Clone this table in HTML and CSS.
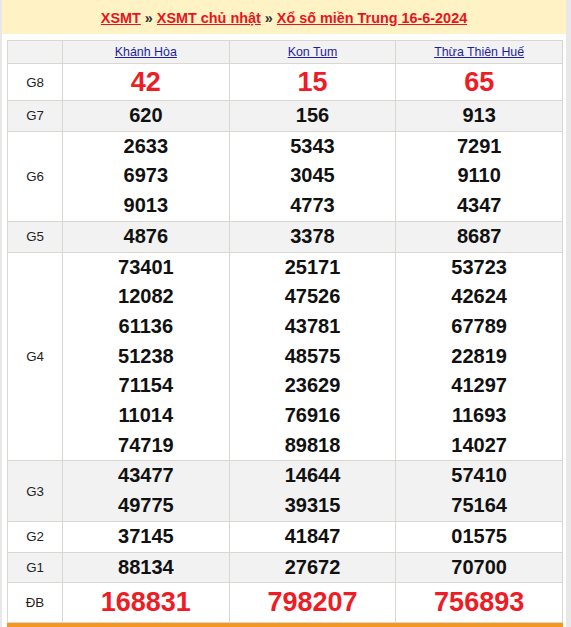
FILE: index.html
```html
<!DOCTYPE html>
<html lang="vi">
<head>
<meta charset="utf-8">
<link rel="stylesheet" href="styles.css">
</head>
<body>
<div class="page">
  <div class="crumbs">
    <a href="#">XSMT</a> <span class="sep">»</span> <a href="#">XSMT chủ nhật</a> <span class="sep">»</span> <a href="#">Xổ số miền Trung 16-6-2024</a>
  </div>
  <div class="content">
    <table class="results">
      <colgroup><col class="c-label"><col><col><col></colgroup>
      <thead>
        <tr class="head"><th></th><th><a href="#">Khánh Hòa</a></th><th><a href="#">Kon Tum</a></th><th><a href="#">Thừa Thiên Huế</a></th></tr>
      </thead>
      <tbody>
        <tr class="g8"><td class="lbl">G8</td><td><div class="n big">42</div></td><td><div class="n big">15</div></td><td><div class="n big">65</div></td></tr>
        <tr class="alt"><td class="lbl">G7</td><td><div class="n">620</div></td><td><div class="n">156</div></td><td><div class="n">913</div></td></tr>
        <tr><td class="lbl">G6</td>
          <td><div class="n">2633</div><div class="n">6973</div><div class="n">9013</div></td>
          <td><div class="n">5343</div><div class="n">3045</div><div class="n">4773</div></td>
          <td><div class="n">7291</div><div class="n">9110</div><div class="n">4347</div></td></tr>
        <tr class="alt"><td class="lbl">G5</td><td><div class="n">4876</div></td><td><div class="n">3378</div></td><td><div class="n">8687</div></td></tr>
        <tr><td class="lbl">G4</td>
          <td><div class="n">73401</div><div class="n">12082</div><div class="n">61136</div><div class="n">51238</div><div class="n">71154</div><div class="n">11014</div><div class="n">74719</div></td>
          <td><div class="n">25171</div><div class="n">47526</div><div class="n">43781</div><div class="n">48575</div><div class="n">23629</div><div class="n">76916</div><div class="n">89818</div></td>
          <td><div class="n">53723</div><div class="n">42624</div><div class="n">67789</div><div class="n">22819</div><div class="n">41297</div><div class="n">11693</div><div class="n">14027</div></td></tr>
        <tr class="alt"><td class="lbl">G3</td>
          <td><div class="n">43477</div><div class="n">49775</div></td>
          <td><div class="n">14644</div><div class="n">39315</div></td>
          <td><div class="n">57410</div><div class="n">75164</div></td></tr>
        <tr><td class="lbl">G2</td><td><div class="n">37145</div></td><td><div class="n">41847</div></td><td><div class="n">01575</div></td></tr>
        <tr class="alt"><td class="lbl">G1</td><td><div class="n">88134</div></td><td><div class="n">27672</div></td><td><div class="n">70700</div></td></tr>
        <tr class="db"><td class="lbl">ĐB</td><td><div class="n big">168831</div></td><td><div class="n big">798207</div></td><td><div class="n big">756893</div></td></tr>
      </tbody>
    </table>
    <div class="footer-bar"></div>
  </div>
</div>
</body>
</html>
```

FILE: styles.css
```css
html, body {
  margin: 0;
  padding: 0;
}
body {
  background: #e8e8e8;
  font-family: "Liberation Sans", Arial, sans-serif;
}
.page {
  margin-left: 2px;
  width: 564px;
  background: #ffffff;
  min-height: 627px;
}
.crumbs {
  height: 34px;
  background: #fff3c6;
  text-align: center;
  font-size: 14.4px;
  font-weight: bold;
  line-height: 36px;
  color: #333333;
}
.crumbs a {
  color: #e8141c;
  text-decoration: underline;
}
.crumbs .sep {
  color: #333333;
}
.content {
  padding: 6px 0 0 5px;
}
.results {
  width: 556px;
  border-collapse: collapse;
  table-layout: fixed;
  border: 1px solid #dad6d0;
}
.results col.c-label {
  width: 55px;
}
.results th,
.results td {
  border: 1px solid #dad6d0;
  padding: 0;
  text-align: center;
  vertical-align: middle;
}
.head th {
  background: #f2f2f2;
  height: 22px;
  line-height: 22px;
  font-weight: normal;
  font-size: 12.4px;
}
.head th a {
  color: #1f1f9e;
  text-decoration: underline;
}
.lbl {
  font-size: 13.3px;
  color: #222222;
}
.alt td {
  background: #f2f2f2;
}
.n {
  font-size: 20px;
  font-weight: bold;
  color: #111111;
  line-height: 29.7px;
}
.n.big {
  font-size: 27px;
  color: #ee1c25;
}
.g8 .n.big {
  line-height: 36px;
}
.db .n.big {
  line-height: 39px;
}
.footer-bar {
  width: 556px;
  height: 6px;
  background: #f7961f;
}
```
